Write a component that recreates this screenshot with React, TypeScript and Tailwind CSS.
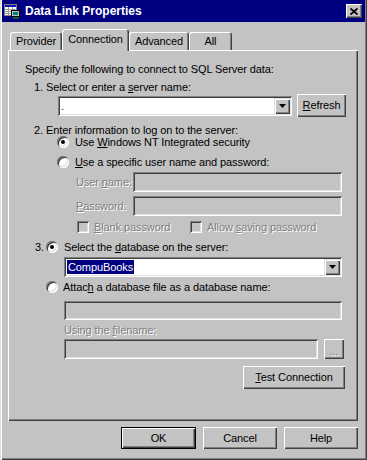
import React from "react";

const raised =
  "shadow-[inset_1px_1px_0_#fff,inset_-1px_-1px_0_#404040,inset_-2px_-2px_0_#808080]";
const sunken =
  "shadow-[inset_1px_1px_0_#808080,inset_-1px_-1px_0_#fff,inset_2px_2px_0_#404040,inset_-2px_-2px_0_#dfdfdf]";
const dis = "text-[#808080] [text-shadow:1px_1px_0_#fff]";

function Radio({ checked }: { checked?: boolean }) {
  return (
    <div className="w-[12px] h-[12px] shrink-0 rounded-full bg-white flex items-center justify-center shadow-[inset_1px_1px_0_#808080,inset_-1px_-1px_0_#fff,inset_2px_2px_0_#404040,inset_-2px_-2px_0_#dfdfdf]">
      {checked && <div className="w-[4px] h-[4px] rounded-full bg-black" />}
    </div>
  );
}

function Check() {
  return (
    <div className="w-[12px] h-[12px] shrink-0 bg-[#c3c3c3] shadow-[inset_1px_1px_0_#808080,inset_-1px_-1px_0_#fff,inset_2px_2px_0_#404040,inset_-2px_-2px_0_#dfdfdf]" />
  );
}

function DropBtn() {
  return (
    <div className="w-[16px] h-[16px] shrink-0 bg-[#c3c3c3] flex items-center justify-center shadow-[inset_1px_1px_0_#dfdfdf,inset_2px_2px_0_#fff,inset_-1px_-1px_0_#404040,inset_-2px_-2px_0_#808080]">
      <svg width="7" height="4" viewBox="0 0 7 4">
        <path d="M0 0h7L3.5 4z" fill="#000" />
      </svg>
    </div>
  );
}

function Tab({ label, w, selected }: { label: React.ReactNode; w: string; selected?: boolean }) {
  return selected ? (
    <div
      className={`${w} h-[22px] -mb-[1px] relative z-10 bg-[#c3c3c3] rounded-t-[3px] flex items-center justify-center pb-[2px] shadow-[inset_1px_1px_0_#fff,inset_-1px_0_0_#404040,inset_-2px_0_0_#808080]`}
    >
      {label}
    </div>
  ) : (
    <div
      className={`${w} h-[18px] bg-[#c3c3c3] rounded-t-[3px] flex items-center justify-center pt-[1px] shadow-[inset_1px_1px_0_#fff,inset_-1px_0_0_#404040,inset_-2px_0_0_#808080]`}
    >
      {label}
    </div>
  );
}

export default function App() {
  return (
    <div className="w-[367px] h-[460px] bg-[#c3c3c3] flex flex-col px-[2px] pb-[2px] text-[11px] tracking-[-0.1px] text-black font-['Liberation_Sans',Arial,sans-serif] shadow-[inset_1px_0_0_#dfdfdf,inset_2px_0_0_#fff,inset_-1px_-1px_0_#404040,inset_-2px_-2px_0_#808080] overflow-hidden">
      {/* Title bar */}
      <div className="h-[22px] shrink-0 bg-[#000080] flex items-center pl-[2px] pr-[3px]">
        <svg width="17" height="16" viewBox="0 0 17 16" className="shrink-0">
          <rect x="0.5" y="1.5" width="12" height="11" fill="#fff" stroke="#808080" />
          <rect x="1" y="2" width="11" height="2" fill="#1010c0" />
          <path d="M1 6.5h11M1 8.5h6M1 10.5h6M4.5 4v8M8.5 4v4" stroke="#9a9a9a" strokeWidth="1" />
          <rect x="7.5" y="7.5" width="8" height="6" fill="#c0c0c0" stroke="#000" />
          <rect x="9" y="9" width="5" height="3" fill="#008080" />
          <rect x="9" y="14" width="6" height="2" fill="#006040" />
        </svg>
        <span className="ml-[4px] text-white font-bold text-[12px] tracking-[0px]">Data Link Properties</span>
        <div className={`ml-auto w-[16px] h-[14px] bg-[#c3c3c3] flex items-center justify-center ${raised}`}>
          <svg width="8" height="7" viewBox="0 0 8 7">
            <path d="M0.5 0.5L7.5 6.5M7.5 0.5L0.5 6.5" stroke="#000" strokeWidth="1.8" />
          </svg>
        </div>
      </div>

      {/* Tabs */}
      <div className="mt-[7px] h-[21px] flex items-end pl-[8px] shrink-0">
        <Tab w="w-[52px]" label="Provider" />
        <Tab w="w-[67px]" label="Connection" selected />
        <Tab w="w-[60px]" label="Advanced" />
        <Tab w="w-[43px]" label="All" />
      </div>

      {/* Panel */}
      <div className="ml-[6px] w-[350px] h-[371px] shrink-0 flex flex-col pt-[13px] shadow-[inset_1px_1px_0_#fff,inset_-1px_-1px_0_#404040,inset_-2px_-2px_0_#808080]">
        <div className="h-[12px] leading-[12px] pl-[17px] whitespace-nowrap">
          Specify the following to connect to SQL Server data:
        </div>
        <div className="mt-[6px] h-[12px] leading-[12px] pl-[26px] whitespace-nowrap">
          1. Select or enter a <u>s</u>erver name:
        </div>
        <div className="mt-[1px] h-[23px] flex items-center">
          <div className={`ml-[50px] w-[234px] h-[20px] bg-white flex items-center pl-[3px] pr-[2px] ${sunken}`}>
            <span className="flex-1 leading-[12px]">.</span>
            <DropBtn />
          </div>
          <div className={`ml-[5px] w-[49px] h-[23px] flex items-center justify-center ${raised}`}>
            <span>
              <u>R</u>efresh
            </span>
          </div>
        </div>
        <div className="mt-[7px] h-[12px] leading-[12px] pl-[26px] whitespace-nowrap">
          2. Enter information to log on to the server:
        </div>
        <div className="h-[12px] flex items-center pl-[49px]">
          <Radio checked />
          <span className="ml-[6px] whitespace-nowrap">
            Use <u>W</u>indows NT Integrated security
          </span>
        </div>
        <div className="mt-[8px] h-[12px] flex items-center pl-[49px]">
          <Radio />
          <span className="ml-[6px] whitespace-nowrap">
            <u>U</u>se a specific user name and password:
          </span>
        </div>
        <div className="mt-[4px] h-[20px] flex items-center pl-[68px]">
          <span className={`w-[57px] whitespace-nowrap ${dis}`}>
            User <u>n</u>ame:
          </span>
          <div className={`w-[209px] h-[20px] ${sunken}`} />
        </div>
        <div className="mt-[4px] h-[20px] flex items-center pl-[68px]">
          <span className={`w-[57px] whitespace-nowrap ${dis}`}>
            <u>P</u>assword:
          </span>
          <div className={`w-[209px] h-[20px] ${sunken}`} />
        </div>
        <div className="mt-[5px] h-[12px] flex items-center pl-[69px]">
          <div className="w-[113px] flex items-center">
            <Check />
            <span className={`ml-[5px] whitespace-nowrap ${dis}`}>
              <u>B</u>lank password
            </span>
          </div>
          <Check />
          <span className={`ml-[5px] whitespace-nowrap ${dis}`}>
            Allow <u>s</u>aving password
          </span>
        </div>
        <div className="mt-[8px] h-[12px] flex items-center pl-[27px]">
          <span className="w-[11px]">3.</span>
          <Radio checked />
          <span className="ml-[6px] whitespace-nowrap">
            Select the <u>d</u>atabase on the server:
          </span>
        </div>
        <div className="mt-[4px] h-[20px] pl-[56px]">
          <div className={`w-[278px] h-[20px] bg-white flex items-center pl-[3px] pr-[2px] ${sunken}`}>
            <div className="flex-1">
              <span className="bg-[#000080] text-white px-[1px] py-[1px] leading-[13px]">CompuBooks</span>
            </div>
            <DropBtn />
          </div>
        </div>
        <div className="mt-[4px] h-[12px] flex items-center pl-[38px]">
          <Radio />
          <span className="ml-[5px] whitespace-nowrap">
            Attac<u>h</u> a database file as a database name:
          </span>
        </div>
        <div className="mt-[8px] h-[19px] pl-[56px]">
          <div className={`w-[278px] h-[19px] ${sunken}`} />
        </div>
        <div className={`mt-[4px] h-[12px] leading-[12px] pl-[56px] whitespace-nowrap ${dis}`}>
          Using the <u>f</u>ilename:
        </div>
        <div className="mt-[3px] h-[20px] flex items-center pl-[56px]">
          <div className={`w-[254px] h-[20px] ${sunken}`} />
          <div className={`ml-[6px] w-[20px] h-[20px] flex items-end justify-center pb-[4px] ${raised}`}>
            <span className={`leading-[8px] ${dis}`}>...</span>
          </div>
        </div>
        <div className="mt-[7px] h-[23px] pl-[235px]">
          <div className={`w-[102px] h-[23px] flex items-center justify-center ${raised}`}>
            <span>
              <u>T</u>est Connection
            </span>
          </div>
        </div>
      </div>

      {/* Buttons */}
      <div className="mt-[6px] ml-[6px] w-[350px] flex justify-end gap-[7px]">
        <div className="w-[75px] h-[22px] border border-black flex items-center justify-center shadow-[inset_1px_1px_0_#fff,inset_-1px_-1px_0_#404040,inset_-2px_-2px_0_#808080]">
          OK
        </div>
        <div className={`w-[74px] h-[22px] flex items-center justify-center ${raised}`}>Cancel</div>
        <div className={`w-[74px] h-[22px] flex items-center justify-center ${raised}`}>Help</div>
      </div>
    </div>
  );
}
